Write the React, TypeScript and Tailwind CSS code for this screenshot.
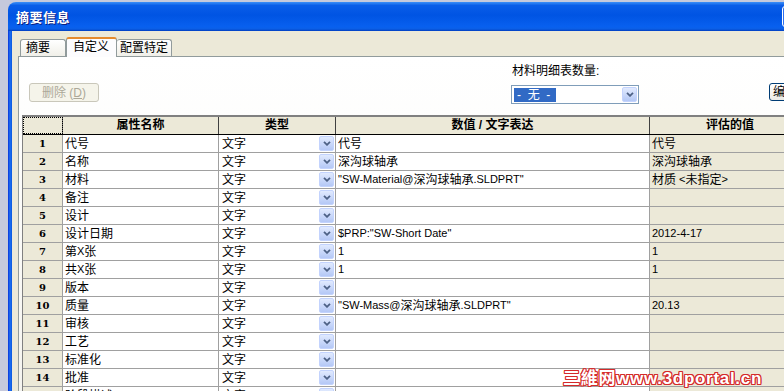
import React from "react";

const CJK = /([\u2e80-\u9fff\u3000-\u303f\uff00-\uffef]+)/;

function Txt({ s }: { s: string }) {
  return (
    <>
      {s.split(CJK).map((p, i) =>
        i % 2 === 1 ? (
          <span key={i} className="text-[12px]">
            {p}
          </span>
        ) : (
          <React.Fragment key={i}>{p}</React.Fragment>
        )
      )}
    </>
  );
}

const rows: [string, string, string][] = [
  ["代号", "代号", "代号"],
  ["名称", "深沟球轴承", "深沟球轴承"],
  ["材料", '"SW-Material@深沟球轴承.SLDPRT"', "材质 <未指定>"],
  ["备注", "", ""],
  ["设计", "", ""],
  ["设计日期", '$PRP:"SW-Short Date"', "2012-4-17"],
  ["第X张", "1", "1"],
  ["共X张", "1", "1"],
  ["版本", "", ""],
  ["质量", '"SW-Mass@深沟球轴承.SLDPRT"', "20.13"],
  ["审核", "", ""],
  ["工艺", "", ""],
  ["标准化", "", ""],
  ["批准", "", ""],
  ["阶段描述", "", ""],
];

function ComboArrow({ className }: { className?: string }) {
  return (
    <div
      className={
        "flex items-center justify-center rounded-[2px] border border-[#c3d3fd] bg-[linear-gradient(to_bottom,#e1eafe,#b4c8f6)] " +
        (className ?? "")
      }
    >
      <svg width="8" height="5" viewBox="0 0 8 5">
        <path d="M1 0.8 L4 3.8 L7 0.8" fill="none" stroke="#4d6185" strokeWidth="1.8" />
      </svg>
    </div>
  );
}

export default function App() {
  return (
    <div className="relative flex w-[784px] h-[391px] overflow-hidden bg-[#c6c9dc] font-['Liberation_Sans','Noto_Sans_CJK_SC',sans-serif] text-[11px] text-black">
      <div className="w-[8px] shrink-0" />
      <div className="flex flex-col w-[800px] shrink-0">
        {/* title bar */}
        <div className="mt-[2px] h-[29px] shrink-0 flex items-center pl-[8px] rounded-tl-[8px] bg-[linear-gradient(to_bottom,#3b8ff8_0%,#0a5de8_12%,#0054e3_45%,#0860ef_85%,#0b5fe6_93%,#003dc0_100%)]">
          <span className="shrink-0 whitespace-nowrap text-[13px] leading-[16px] font-bold text-white tracking-[0.5px] [text-shadow:1px_1px_0_#0a1e80] font-['Noto_Sans_CJK_SC',sans-serif]">
            摘要信息
          </span>
          <div className="ml-auto mr-[5px] w-[21px] h-[21px] shrink-0 rounded-[3px] border border-white bg-[#2e6ff0]" />
        </div>

        {/* body */}
        <div className="flex flex-1">
          <div className="w-[4px] shrink-0 bg-[linear-gradient(to_right,#0831d9,#1d6ff2,#0a58e0)]" />
          <div className="flex-1 bg-[#ece9d8] pl-[6px] pt-[6px] flex flex-col">
            {/* tabs */}
            <div className="flex items-end h-[19px] pl-[2px] shrink-0">
              <div className="w-[46px] h-[17px] border border-b-0 border-[#919b9c] rounded-t-[3px] bg-[linear-gradient(to_bottom,#ffffff,#f0efe8)] pl-[5px] text-[12px] leading-[16px] whitespace-nowrap">
                摘要
              </div>
              <div className="relative z-10 -mb-px w-[51px] h-[20px] border border-b-0 border-[#919b9c] border-t-[#e68b2c] border-t-2 rounded-t-[3px] bg-[#fcfcfe] pl-[6px] text-[12px] leading-[17px] whitespace-nowrap">
                自定义
              </div>
              <div className="w-[55px] h-[17px] border border-b-0 border-l-0 border-[#919b9c] rounded-t-[3px] bg-[linear-gradient(to_bottom,#ffffff,#f0efe8)] pl-[3px] text-[12px] leading-[16px] whitespace-nowrap">
                配置特定
              </div>
            </div>

            {/* panel */}
            <div className="flex-1 border border-r-0 border-b-0 border-[#919b9c] bg-[linear-gradient(to_bottom,#ffffff_0%,#fcfcfa_40%,#f4f3ee_100%)] flex flex-col">
              <div className="flex h-[58px] shrink-0">
                <div className="w-[492px] shrink-0 pt-[26px] pl-[10px]">
                  <div className="w-[70px] h-[19px] rounded-[3px] border border-[#c9c7ba] bg-[#f5f4ea] flex items-center justify-center text-[12px] text-[#aca899]">
                    删除 (<span className="underline">D</span>)
                  </div>
                </div>
                <div className="w-[258px] shrink-0 pt-[7px]">
                  <div className="pl-[1px] leading-[14px] text-[12px]">材料明细表数量:</div>
                  <div className="mt-[7px] w-[128px] h-[19px] border border-[#7f9db9] bg-white flex items-center justify-between pl-[2px] pr-[1px]">
                    <span className="w-[42px] h-[14px] bg-[#316ac5] text-white whitespace-pre leading-[14px] text-[12px] pl-[3px]">
                      -  无  -
                    </span>
                    <ComboArrow className="w-[15px] h-[15px]" />
                  </div>
                </div>
                <div className="pt-[26px] shrink-0">
                  <div className="w-[75px] h-[18px] rounded-[3px] border border-[#003c74] bg-[linear-gradient(to_bottom,#ffffff,#ecebe6)] pl-[3px] text-[12px] leading-[16px] whitespace-nowrap">
                    编辑...
                  </div>
                </div>
              </div>

              {/* table */}
              <div className="ml-[3px] w-[800px] border-t-2 border-l border-[#808080] flex flex-col">
                <div className="flex h-[18px] shrink-0 bg-[#ece9d8] border-b border-black font-bold text-[12px]">
                  <div className="w-[40px] shrink-0 border-r border-[#707070] outline-1 outline-dotted outline-black -outline-offset-1" />
                  <div className="w-[156px] shrink-0 border-r border-[#404040] text-center leading-[17px]">属性名称</div>
                  <div className="w-[117px] shrink-0 border-r border-[#404040] text-center leading-[17px]">类型</div>
                  <div className="w-[314px] shrink-0 border-r border-[#404040] text-center leading-[17px]">数值 / 文字表达</div>
                  <div className="w-[160px] shrink-0 text-center leading-[17px]">评估的值</div>
                </div>
                {rows.map(([name, val, ev], i) => (
                  <div key={i} className="flex h-[18px] shrink-0 border-b border-[#a0a0a0]">
                    <div className="w-[40px] shrink-0 bg-[#ece9d8] border-r border-[#a0a0a0] flex items-center justify-center font-['DejaVu_Serif'] font-bold text-[10px]">
                      {i + 1}
                    </div>
                    <div className="w-[156px] shrink-0 bg-white border-r border-[#a0a0a0] flex items-center pl-[2px] whitespace-pre">
                      <Txt s={name} />
                    </div>
                    <div className="w-[117px] shrink-0 bg-white border-r border-[#a0a0a0] flex items-center justify-between pl-[3px] pr-[1px]">
                      <span className="text-[12px]">文字</span>
                      <ComboArrow className="w-[15px] h-[15px]" />
                    </div>
                    <div className="w-[314px] shrink-0 bg-white border-r border-[#a0a0a0] flex items-center pl-[2px] whitespace-pre">
                      <Txt s={val} />
                    </div>
                    <div className="w-[160px] shrink-0 bg-[#ece9d8] flex items-center pl-[2px] whitespace-pre">
                      <Txt s={ev} />
                    </div>
                  </div>
                ))}
              </div>
            </div>
          </div>
        </div>
      </div>

      {/* watermark */}
      <div className="absolute left-[563px] top-[369px] whitespace-nowrap text-[17px] leading-[20px] font-bold text-white tracking-[0.7px] font-['Liberation_Sans','Noto_Sans_CJK_SC',sans-serif] [text-shadow:1px_0_0_#d42a2a,-1px_0_0_#d42a2a,0_1px_0_#d42a2a,0_-1px_0_#d42a2a,1px_1px_0_#d42a2a,-1px_-1px_0_#d42a2a,1px_-1px_0_#d42a2a,-1px_1px_0_#d42a2a]">
        三維网www.3dportal.cn
      </div>
    </div>
  );
}
